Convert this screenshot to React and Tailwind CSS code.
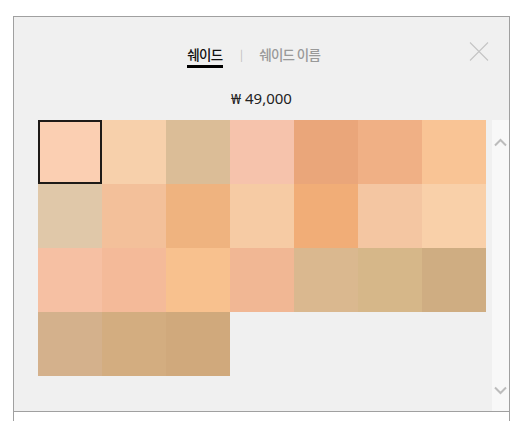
import React from "react";

const rows = [
  ["#fbcfb2", "#f7d0ab", "#dbbd97", "#f6c3ac", "#eaa67a", "#f0b085", "#f9c495"],
  ["#e0c8a9", "#f3c09a", "#efb37f", "#f6cba4", "#f1ad77", "#f4c6a2", "#f9d0a9"],
  ["#f6c0a3", "#f4ba99", "#f8c18e", "#f1b794", "#dab88f", "#d6b789", "#cfad82"],
  ["#d4b18c", "#d3ad80", "#d0a97c"],
];

export default function App() {
  return (
    <div className="w-[526px] h-[421px] bg-white pl-[13px] pt-[16px] overflow-hidden" style={{ fontFamily: '"Noto Sans CJK KR", "Noto Sans", sans-serif' }}>
      <div className="w-[497px] h-[405px] border-l border-r border-t border-[#a0a0a0] flex flex-col">
        <div className="relative h-[395px] bg-[#f0f0f0] border-b border-[#a0a0a0] flex flex-col">
          <div className="h-[103px] flex flex-col items-center">
            <div className="flex items-start pt-[27px] pr-[16px] text-[13.5px] tracking-[-0.7px] leading-[20px]">
              <div className="flex flex-col items-center text-[#111] font-medium">
                <span>쉐이드</span>
                <span className="w-[36px] h-[3px] bg-black mt-[1px]"></span>
              </div>
              <span className="mx-[17px] text-[#bbb] text-[11px] leading-[20px]">|</span>
              <span className="text-[#999] font-medium">쉐이드 이름</span>
            </div>
            <div className="mt-[20px] text-[15px] leading-[20px] text-[#222]" style={{ fontFamily: '"Noto Sans", sans-serif' }}>₩ 49,000</div>
          </div>
          <svg className="absolute left-[455px] top-[25px]" width="20" height="19" viewBox="0 0 20 19">
            <path d="M1 0.5 L19 18.5 M19 0.5 L1 18.5" stroke="#c4c4c4" strokeWidth="1.1" fill="none" />
          </svg>
          <div className="flex flex-1">
            <div className="flex-1 pl-[24px]">
              {rows.map((r, i) => (
                <div key={i} className="flex">
                  {r.map((c, j) => (
                    <div
                      key={j}
                      className={i === 0 && j === 0 ? "w-[64px] h-[64px] border-2 border-[#1e1a17]" : "w-[64px] h-[64px]"}
                      style={{ backgroundColor: c }}
                    ></div>
                  ))}
                </div>
              ))}
            </div>
            <div className="w-[17px] bg-[#f8f8f8] flex flex-col justify-between items-center pt-[18px] pb-[16px]">
              <svg width="13" height="9" viewBox="0 0 13 9">
                <path d="M1 7.5 L6.5 2 L12 7.5" stroke="#bcbcbc" strokeWidth="2" fill="none" />
              </svg>
              <svg width="13" height="9" viewBox="0 0 13 9">
                <path d="M1 1.5 L6.5 7 L12 1.5" stroke="#bcbcbc" strokeWidth="2" fill="none" />
              </svg>
            </div>
          </div>
        </div>
        <div className="flex-1 bg-white"></div>
      </div>
    </div>
  );
}
